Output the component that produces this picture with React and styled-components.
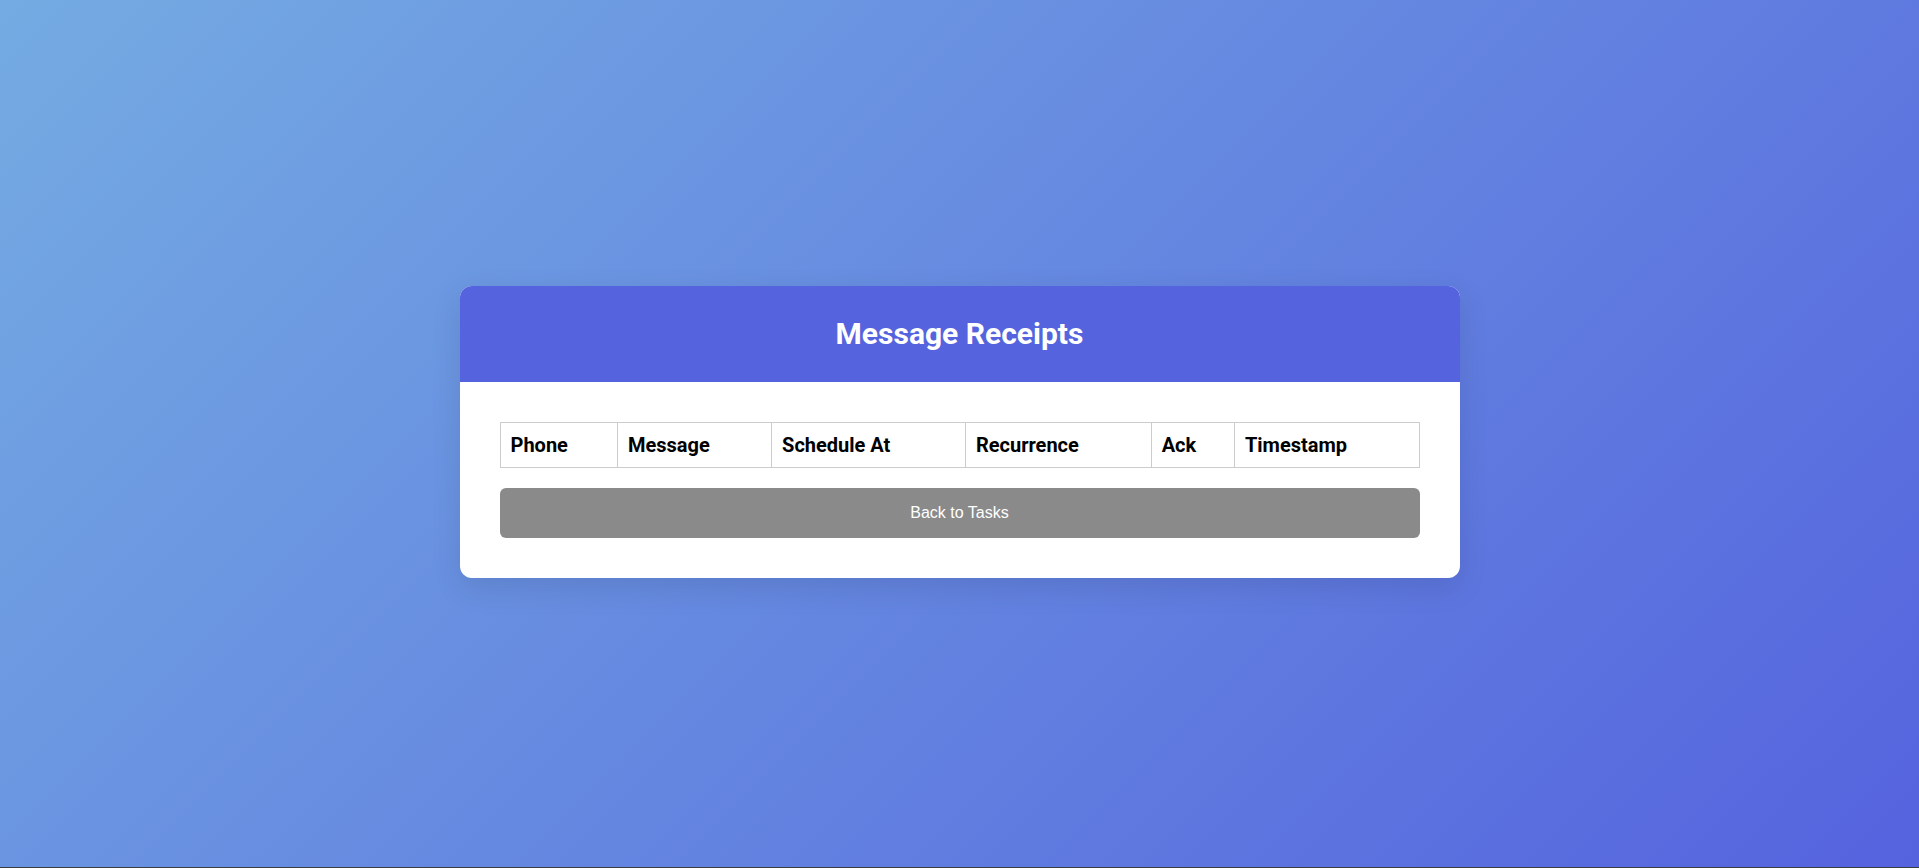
import React from "react";
import styled, { createGlobalStyle } from "styled-components";

const GlobalStyle = createGlobalStyle`
  html, body { margin: 0; padding: 0; }
  html { background: #3b3b42; }
  body { font-family: Roboto, "Liberation Sans", Arial, sans-serif; }
`;

const Page = styled.div`
  box-sizing: border-box;
  min-height: calc(100vh - 1px);
  padding-bottom: 4px;
  background: linear-gradient(135deg, #74abe2 0%, #5563de 100%);
  display: flex;
  align-items: center;
  justify-content: center;
`;

const Card = styled.div`
  width: 1000px;
  background: #ffffff;
  border-radius: 12px;
  overflow: hidden;
  box-shadow: 0 10px 30px rgba(0, 0, 0, 0.1);
`;

const Header = styled.div`
  background: #5563de;
  height: 96px;
  display: flex;
  align-items: center;
  justify-content: center;
`;

const Title = styled.h2`
  margin: 0;
  color: #ffffff;
  font-family: Roboto, sans-serif;
  font-weight: 700;
  font-size: 30px;
`;

const Body = styled.div`
  padding: 40px;
  display: flex;
  flex-direction: column;
  gap: 20px;
`;

const Table = styled.table`
  width: 100%;
  border-collapse: collapse;
`;

const Th = styled.th`
  border: 1px solid #cccccc;
  padding: 0 10px;
  height: 44px;
  text-align: left;
  font-family: Roboto, sans-serif;
  font-weight: 700;
  font-size: 20px;
  color: #000000;
  background: #ffffff;
`;

const Button = styled.button`
  width: 100%;
  height: 50px;
  border: none;
  border-radius: 6px;
  background: #8a8a8a;
  color: #ffffff;
  font-family: "Liberation Sans", Arial, sans-serif;
  font-size: 16px;
  cursor: pointer;
`;

const columns = ["Phone", "Message", "Schedule At", "Recurrence", "Ack", "Timestamp"];

export default function App() {
  return (
    <>
      <GlobalStyle />
      <Page>
        <Card>
          <Header>
            <Title>Message Receipts</Title>
          </Header>
          <Body>
            <Table>
              <thead>
                <tr>
                  {columns.map((c) => (
                    <Th key={c}>{c}</Th>
                  ))}
                </tr>
              </thead>
              <tbody />
            </Table>
            <Button>Back to Tasks</Button>
          </Body>
        </Card>
      </Page>
    </>
  );
}
